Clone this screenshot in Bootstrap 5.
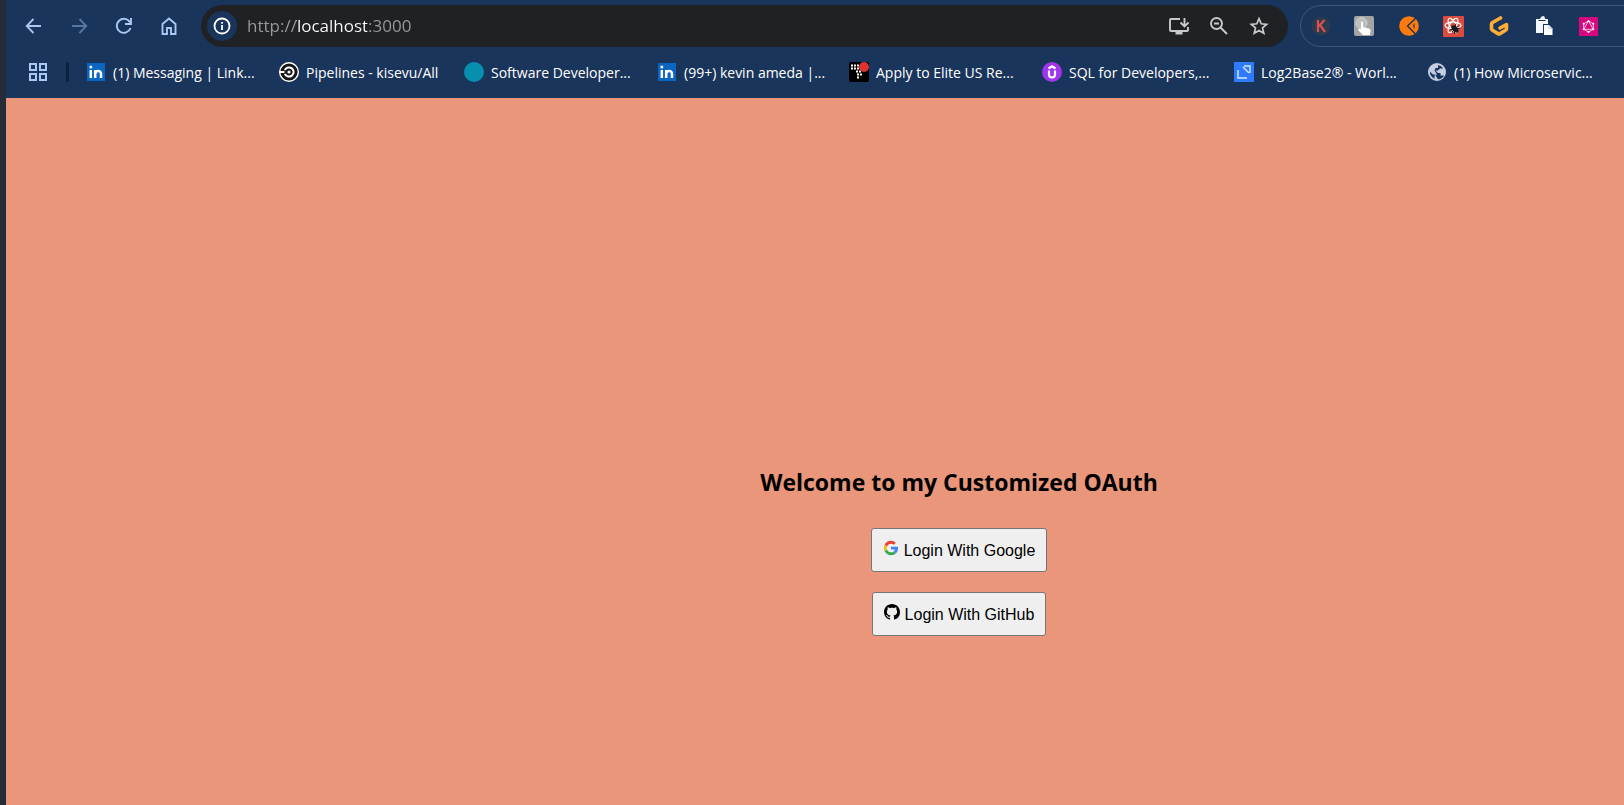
<!DOCTYPE html>
<html lang="en">
<head>
<meta charset="utf-8">
<meta name="viewport" content="width=device-width, initial-scale=1">
<title>Customized OAuth</title>
<link href="https://cdn.jsdelivr.net/npm/bootstrap@5.3.0/dist/css/bootstrap.min.css" rel="stylesheet">
<style>
  body { font-family: "Open Sans", "Noto Sans", sans-serif; background: #e9967a; border-left: 6px solid #252c38; overflow: hidden; }
  .chrome-ui { background: #1a355b; color: #fff; }
  .toolbar { height: 52px; padding-left: 5px; }
  .nav-buttons { width: 190px; }
  .tool-btn { width: 45px; height: 40px; border: 0; background: none; color: #a9c7f2; padding: 0; display: grid; place-items: center; flex: none; }
  .tool-btn:disabled { color: #58779f; }
  .address { height: 42px; background: #202124; border-radius: 21px; padding: 0 9px 0 6px; }
  .address .tool-btn { width: 40px; color: #c7c9cc; }
  .address .site-info { width: 30px; height: 30px; border-radius: 50%; background: #1a355b; color: #fff; }
  .url { border: 0; outline: 0; padding: 0; margin-left: 10px; font-size: 17px; color: #999b9e; -webkit-text-fill-color: transparent;
    background: linear-gradient(90deg, #999b9e 49px, #fff 49px, #fff 120px, #999b9e 120px); -webkit-background-clip: text; background-clip: text; }
  .extensions { height: 42px; width: 324px; border: 1px solid #3a557c; border-right: 0; border-radius: 21px 0 0 21px; margin-left: 12px; }
  .extensions .tool-btn:first-child { width: 40px; }
  .bookmarks { height: 46px; padding: 0 0 6px 22px; font-size: 14px; }
  .divider { width: 3px; height: 20px; background: #0b2142; border-radius: 2px; margin: 0 17px 0 18px; }
  .bookmark { color: #fff; text-decoration: none; width: 193px; gap: 7px; white-space: nowrap; flex: none; }
  .bookmark:nth-of-type(even) { width: 192px; }
  .bookmark.short-title { width: 185px; }
  .welcome { padding: 368px 0 0 288px; color: #000; }
  .welcome h1 { font-size: 23px; font-weight: 700; line-height: 32px; margin: 0 0 30px; }
  .login { font-family: "Liberation Sans", Arial, sans-serif; font-size: 16px; line-height: 20px; color: #000; background: #efefef; border: 1px solid #767676; border-radius: 3px; height: 44px; padding: 1px 11px 0; margin-bottom: 20px; gap: 5px; }
  .login svg { margin-bottom: 5px; }
  svg { flex: none; display: block; }
</style>
</head>
<body class="min-vh-100">
<header class="chrome-ui">
  <div class="toolbar d-flex align-items-center">
    <div class="nav-buttons d-flex">
      <button class="tool-btn" type="button" aria-label="Back"><svg width="20" height="20" viewBox="0 0 20 20" fill="none" stroke="currentColor" stroke-width="1.8"><path d="M17 10H3M9.500 3 2.700 10l6.800 7"/></svg></button>
      <button class="tool-btn" type="button" aria-label="Forward" disabled><svg width="20" height="20" viewBox="0 0 20 20" fill="none" stroke="currentColor" stroke-width="1.800"><path d="M3 10h14M10.500 3l6.800 7-6.800 7"/></svg></button>
      <button class="tool-btn" type="button" aria-label="Reload"><svg width="20" height="20" viewBox="0 0 20 20" fill="none" stroke="currentColor" stroke-width="1.900"><path d="M16.500 12A7 7 0 1 1 16 6.500M17 2v6h-6"/></svg></button>
      <button class="tool-btn" type="button" aria-label="Home"><svg width="20" height="20" viewBox="0 0 20 20" fill="none" stroke="currentColor" stroke-width="1.900"><path d="M3.500 18V8L10 2.500 16.500 8v10H12v-6H8v6z"/></svg></button>
    </div>
    <div class="address d-flex align-items-center flex-grow-1">
      <button class="tool-btn site-info" type="button" aria-label="Site information"><svg width="18" height="18" viewBox="0 0 18 18" fill="none" stroke="currentColor" stroke-width="1.800"><circle cx="9" cy="9" r="7.500"/><path d="M9 8v5M9 5v1.800"/></svg></button>
      <input class="url flex-grow-1" type="text" aria-label="Address" value="http://localhost:3000">
      <button class="tool-btn" type="button" aria-label="Install app"><svg width="22" height="20" viewBox="0 0 22 20" fill="none" stroke="currentColor" stroke-width="1.900"><path d="M12 3H3q-1 0-1 1v10q0 1 1 1h16q1 0 1-1v-3M16.500 2v8M12.500 6.500l4 4 4-4"/><path d="M7.500 17h7" stroke-width="3"/></svg></button>
      <button class="tool-btn" type="button" aria-label="Zoom"><svg width="20" height="20" viewBox="0 0 20 20" fill="none" stroke="currentColor" stroke-width="1.900"><circle cx="7.500" cy="7.500" r="5.500"/><path d="M11.500 11.500l6.500 6.500M5 7.500h5"/></svg></button>
      <button class="tool-btn" type="button" aria-label="Bookmark this page"><svg width="20" height="20" viewBox="0 0 20 20" fill="none" stroke="currentColor" stroke-width="1.700"><path d="M10 2.700l2.200 5.100 5.500.5-4.200 3.600 1.300 5.400-4.800-2.900-4.800 2.900 1.300-5.400-4.200-3.600 5.500-.5z"/></svg></button>
    </div>
    <div class="extensions d-flex align-items-center">
      <button class="tool-btn" type="button" aria-label="K extension"><svg width="20" height="20" viewBox="0 0 20 20"><circle cx="10" cy="10" r="9.500" fill="#2b3b50"/><path d="M7 4v12M13.500 4 7.500 10.500M9 9l5 7" fill="none" stroke="#dc4f50" stroke-width="2.200"/></svg></button>
      <button class="tool-btn" type="button" aria-label="Pointer extension"><svg width="20" height="20" viewBox="0 0 20 20"><rect width="20" height="20" rx="2" fill="#a4a4a4"/><circle cx="7.500" cy="7" r="5.500" fill="#bebebe" stroke="#d1d1d1"/><path d="M7 6q1.200-1 2 0v5l6 1.500q2 .5 1.500 2.500L16 19H9l-5-5q1-2 3-.5z" fill="#fff"/></svg></button>
      <button class="tool-btn" type="button" aria-label="Orange extension"><svg width="20" height="20" viewBox="0 0 20 20"><circle cx="10" cy="10" r="9.800" fill="#ff7a0c"/><path d="M17 2 8.500 10l8 8" fill="none" stroke="#1a355b" stroke-width="1.400"/><path d="M15.500 7q-2.500 3 0 6z" fill="#1a355b"/></svg></button>
      <button class="tool-btn" type="button" aria-label="React debugger"><svg width="21" height="21" viewBox="0 0 21 21"><rect width="21" height="21" rx="1" fill="#dc4b3f"/><g fill="none" stroke="#fff" stroke-width="1.200"><ellipse cx="10" cy="9.500" rx="8" ry="3.300"/><ellipse cx="10" cy="9.500" rx="8" ry="3.300" transform="rotate(60 10 9.500)"/><ellipse cx="10" cy="9.500" rx="8" ry="3.300" transform="rotate(120 10 9.500)"/></g><g transform="rotate(-45 12 13)"><ellipse cx="12" cy="13" rx="2.500" ry="4.500" fill="#19191b"/><path d="M8 10l8 6M8 16l8-6M8 13h8" stroke="#19191b"/></g></svg></button>
      <button class="tool-btn" type="button" aria-label="Gitpod"><svg width="20" height="20" viewBox="0 0 20 20" fill="none" stroke="#ffad33" stroke-width="3.600" stroke-linejoin="round" stroke-linecap="round"><path d="M11.500 2 3.500 6.500q-1 .6-1 1.700v4.500q0 1 1 1.600l5.500 3.300q1 .6 2 0l5.500-3.300q1-.6 1-1.600V8.500L11 12"/></svg></button>
      <button class="tool-btn" type="button" aria-label="Clipboard extension"><svg width="18" height="20" viewBox="0 0 18 20"><path d="M1 3h4q1-3 3-3t2 3h3v5H8v9H1z" fill="#f5f7fa"/><path d="M3.500 4.500h7" stroke="#1a355b"/><path d="M9 9h5l3.500 3.500V19H9z" fill="#fff"/><path d="M14 9v3.500h3.500" fill="none" stroke="#aab9cd" stroke-width=".8"/></svg></button>
      <button class="tool-btn" type="button" aria-label="GraphQL"><svg width="19" height="19" viewBox="0 0 19 19"><rect width="19" height="19" fill="#d6087f"/><g fill="none" stroke="#f9d4e9" stroke-width=".9"><path d="M9.500 4l4.800 2.700v5.600L9.500 15l-4.800-2.700V6.700zM9.500 4l4.800 8.300H4.700z"/></g><g fill="#fff"><circle cx="9.500" cy="4" r="1"/><circle cx="14.300" cy="6.700" r="1"/><circle cx="14.300" cy="12.300" r="1"/><circle cx="9.500" cy="15" r="1"/><circle cx="4.700" cy="12.300" r="1"/><circle cx="4.700" cy="6.700" r="1"/></g></svg></button>
    </div>
  </div>
  <nav class="bookmarks d-flex align-items-center" aria-label="Bookmarks">
    <button class="tool-btn w-auto" type="button" aria-label="All tabs"><svg width="20" height="20" viewBox="0 0 20 20" fill="none" stroke="#a9c7f2" stroke-width="2"><path d="M2 2h6v6H2zM12 2h6v6h-6zM2 12h6v6H2zM12 12h6v6h-6z"/></svg></button>
    <span class="divider"></span>
    <a class="bookmark d-flex align-items-center" href="#"><svg width="20" height="20" viewBox="0 0 20 20"><path d="M1 1h18v18H1z" fill="#0b66c2"/><path d="M4.800 8v8M9.200 8v8M9.200 12q0-3 2.900-3t2.900 3v4" fill="none" stroke="#fff" stroke-width="2.500"/><circle cx="4.800" cy="5" r="1.500" fill="#fff"/></svg>(1) Messaging | Link...</a>
    <a class="bookmark short-title d-flex align-items-center" href="#"><svg width="20" height="20" viewBox="0 0 20 20"><circle cx="10" cy="10" r="10" fill="#fff"/><circle cx="10" cy="10" r="8.600" fill="#161616"/><path d="M0 10h5.500" stroke="#fff" stroke-width="2"/><path d="M5.800 8.200a4.600 4.600 0 1 1 0 3.600" fill="none" stroke="#fff" stroke-width="2"/><circle cx="10" cy="10" r="1.600" fill="#fff"/></svg>Pipelines - kisevu/All</a>
    <a class="bookmark d-flex align-items-center" href="#"><svg width="20" height="20" viewBox="0 0 20 20"><circle cx="10" cy="10" r="10" fill="#078fb0"/></svg>Software Developer...</a>
    <a class="bookmark d-flex align-items-center" href="#"><svg width="20" height="20" viewBox="0 0 20 20"><path d="M1 1h18v18H1z" fill="#0b66c2"/><path d="M4.800 8v8M9.200 8v8M9.200 12q0-3 2.900-3t2.900 3v4" fill="none" stroke="#fff" stroke-width="2.500"/><circle cx="4.800" cy="5" r="1.500" fill="#fff"/></svg>(99+) kevin ameda |...</a>
    <a class="bookmark d-flex align-items-center" href="#"><svg width="20" height="20" viewBox="0 0 20 20"><rect width="20" height="20" rx="2" fill="#000"/><path d="M2 3.500h10M2 6.500h10M7 9.500h6M8 12.500h5M8 15.500h3" stroke="#fff" stroke-width="2" stroke-dasharray="2 1"/><circle cx="15" cy="5" r="5" fill="#e03131"/></svg>Apply to Elite US Re...</a>
    <a class="bookmark d-flex align-items-center" href="#"><svg width="20" height="20" viewBox="0 0 20 20"><circle cx="10" cy="10" r="10" fill="#a135ee"/><path d="M7 8.500v4q0 3 3 3t3-3v-4M6.500 6.500 10 4.300l3.500 2.200" fill="none" stroke="#fff" stroke-width="2.200"/></svg>SQL for Developers,...</a>
    <a class="bookmark d-flex align-items-center" href="#"><svg width="20" height="20" viewBox="0 0 20 20"><path d="M0 0h20v20H0z" fill="#2e7bff"/><path d="M4 8v8h9M10 4h6v7M9 5l6 6" fill="none" stroke="#d9e8ff" stroke-width="1.400"/></svg>Log2Base2® - Worl...</a>
    <a class="bookmark d-flex align-items-center" href="#"><svg width="20" height="20" viewBox="0 0 20 20"><circle cx="10" cy="10" r="9" fill="#c5cee0"/><path d="M11 3q3.500.5 5.200 3.500H13L11 8.500H8.500L11 11h2.500v2.500H17Q15.500 17 11 17.200L9.500 15l-1-2.500H6L3 9.500q-.5 4.500 4.500 7.200v-3.200l2.500-1L7.500 8.500l1-2.500H11z" fill="#1a355b"/></svg>(1) How Microservic...</a>
  </nav>
</header>
<main class="welcome d-flex flex-column align-items-center">
  <h1>Welcome to my Customized OAuth</h1>
  <button class="login d-flex align-items-center" type="button"><svg width="16" height="16" viewBox="0 0 48 48"><path fill="#ea4335" d="M24 11c3.500 0 6.300 1.200 8.500 3.300l6-6C34.800 4.800 30 2.500 24 2.500c-8.400 0-15.600 4.800-19.100 11.800l7 5.500C13.600 14.700 18.400 11 24 11z"/><path fill="#4285f4" d="M45 24.500c0-1.500-.2-3-.4-4.500H24v8.500h11.800c-.5 2.700-2.100 5-4.400 6.500l6.900 5.400c4.300-4 6.700-9.700 6.700-15.900z"/><path fill="#fbbc05" d="M11.900 28.200a13 13 0 0 1 0-8.400l-7-5.500a21.500 21.500 0 0 0 0 19.400z"/><path fill="#34a853" d="M24 45.500c5.800 0 10.700-1.900 14.300-5.100L31.400 35c-2 1.300-4.400 2-7.400 2-5.600 0-10.400-3.700-12.100-8.800l-7 5.500C8.400 40.700 15.600 45.500 24 45.500z"/></svg>Login With Google</button>
  <button class="login d-flex align-items-center" type="button"><svg width="16" height="16" viewBox="0 0 16 16"><path d="M8 0C3.580 0 0 3.580 0 8c0 3.540 2.290 6.530 5.470 7.590.4.070.55-.17.55-.38 0-.19-.01-.82-.01-1.490-2.010.37-2.530-.49-2.690-.94-.09-.23-.48-.94-.82-1.130-.28-.15-.68-.52-.01-.53.63-.01 1.080.58 1.230.82.72 1.210 1.870.87 2.330.66.070-.52.28-.87.51-1.070-1.780-.2-3.640-.89-3.640-3.950 0-.87.31-1.590.82-2.150-.08-.2-.36-1.020.08-2.120 0 0 .67-.21 2.200.82.64-.18 1.320-.27 2-.27s1.360.09 2 .27c1.530-1.040 2.200-.82 2.200-.82.44 1.100.16 1.920.08 2.120.51.56.82 1.270.82 2.150 0 3.070-1.870 3.750-3.650 3.950.29.25.54.73.54 1.480 0 1.070-.01 1.930-.01 2.200 0 .21.15.46.55.38A8 8 0 0 0 16 8c0-4.420-3.580-8-8-8z"/></svg>Login With GitHub</button>
</main>
<script src="https://cdn.jsdelivr.net/npm/bootstrap@5.3.0/dist/js/bootstrap.bundle.min.js"></script>
</body>
</html>
